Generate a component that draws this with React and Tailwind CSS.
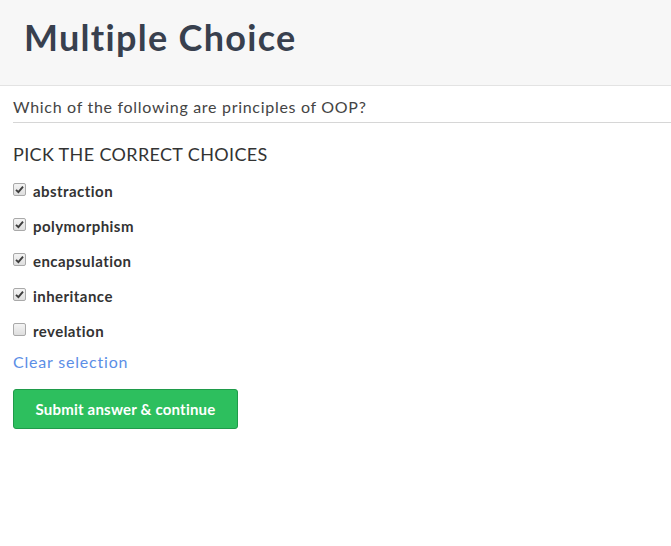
import { useState } from "react";

const choices = [
    { label: "abstraction", checked: true },
    { label: "polymorphism", checked: true },
    { label: "encapsulation", checked: true },
    { label: "inheritance", checked: true },
    { label: "revelation", checked: false },
];

function Box({ checked, onClick }) {
    return (
        <span
            onClick={onClick}
            className="flex h-[13px] w-[13px] shrink-0 items-center justify-center rounded-[2px] border border-[#a9a9a9] bg-gradient-to-b from-[#f4f4f4] to-[#dedede]"
        >
            {checked && (
                <svg width="9" height="9" viewBox="0 0 9 9">
                    <path d="M1 4.8 L3.4 7.2 L8 1.6" fill="none" stroke="#3d3d3d" strokeWidth="1.9" />
                </svg>
            )}
        </span>
    );
}

export default function App() {
    const [state, setState] = useState(choices.map((c) => c.checked));

    return (
        <div className="min-h-screen bg-white font-['Lato',sans-serif] text-[#333]">
            <div className="h-[86px] border-b border-[#e3e3e3] bg-[#f7f7f7] pl-6 pt-[13px]">
                <h1 className="text-[36px] leading-[48px] font-bold tracking-[1.3px] text-[#38404e]">Multiple Choice</h1>
            </div>

            <div className="pl-[13px]">
                <p className="border-b border-[#d6d6d6] pt-[10px] pb-[5px] text-[16px] leading-[21px] tracking-[0.7px] text-[#444]">
                    Which of the following are principles of OOP?
                </p>

                <h2 className="mt-[19px] text-[18px] leading-[24px] tracking-[0.35px] text-[#333]">PICK THE CORRECT CHOICES</h2>

                <div className="mt-[8px] flex flex-col">
                    {choices.map((c, i) => (
                        <label key={c.label} className="flex h-[35px] items-center gap-[7px]">
                            <span className="-mt-[5px]">
                                <Box
                                    checked={state[i]}
                                    onClick={() => setState(state.map((v, j) => (j === i ? !v : v)))}
                                />
                            </span>
                            <span className="text-[15px] font-bold tracking-[0.45px] text-[#333]">{c.label}</span>
                        </label>
                    ))}
                </div>

                <a href="#" onClick={() => setState(state.map(() => false))} className="mt-[3px] block text-[16px] leading-[20px] tracking-[0.8px] text-[#5b8ee6]">
                    Clear selection
                </a>

                <button className="mt-[17px] h-[40px] w-[225px] rounded-[3px] border border-[#1f9b4a] bg-[#2dbf5e] text-[15px] font-bold tracking-[0.2px] text-white">
                    Submit answer &amp; continue
                </button>
            </div>
        </div>
    );
}
